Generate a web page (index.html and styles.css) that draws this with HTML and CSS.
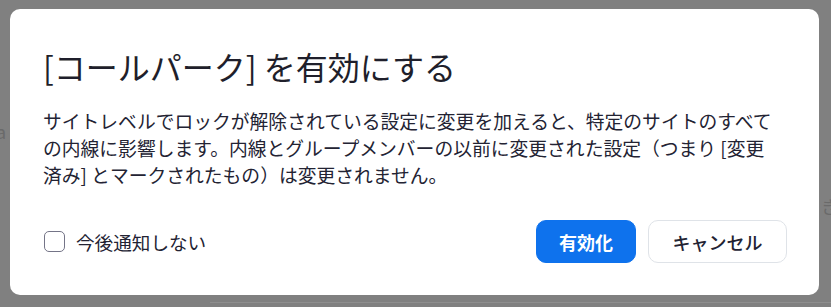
FILE: index.html
```html
<!DOCTYPE html>
<html lang="ja">
<head>
<meta charset="utf-8">
<title>コールパーク</title>
<link rel="stylesheet" href="styles.css">
</head>
<body>
<div class="backdrop">
  <span class="bg-hint bg-hint-left">a</span>
  <span class="bg-hint bg-hint-right">き</span>
  <div class="bg-line"></div>
</div>
<div class="overlay">
  <div class="dialog" role="dialog" aria-labelledby="dlg-title">
    <h1 class="dialog-title" id="dlg-title">[コールパーク] を有効にする</h1>
    <p class="dialog-body">サイトレベルでロックが解除されている設定に変更を加えると、特定のサイトのすべての内線に影響します。内線とグループメンバーの以前に変更された設定（つまり [変更済み] とマークされたもの）は変更されません。</p>
    <div class="dialog-footer">
      <label class="check">
        <span class="check-box"></span>
        <span class="check-label">今後通知しない</span>
      </label>
      <div class="actions">
        <button class="btn btn-primary">有効化</button>
        <button class="btn btn-secondary">キャンセル</button>
      </div>
    </div>
  </div>
</div>
</body>
</html>
```

FILE: styles.css
```css
html, body {
  margin: 0;
  padding: 0;
}

body {
  width: 831px;
  height: 307px;
  overflow: hidden;
  background: #808080;
  font-family: "Noto Sans CJK JP", "Noto Sans", sans-serif;
  position: relative;
}

.backdrop {
  position: absolute;
  inset: 0;
}

.bg-hint {
  position: absolute;
  color: #6a6a6a;
  font-size: 18px;
}

.bg-hint-left {
  left: -4px;
  top: 118px;
}

.bg-hint-right {
  right: -8px;
  top: 193px;
}

.bg-line {
  position: absolute;
  left: 210px;
  right: 0;
  top: 302px;
  height: 1px;
  background: #8e8e8e;
}

.overlay {
  position: absolute;
  inset: 0;
  display: flex;
  align-items: flex-start;
  padding: 9px 0 0 10px;
}

.dialog {
  width: 809px;
  box-sizing: border-box;
  background: #ffffff;
  border-radius: 10px;
  padding: 35px 32px 32px 33px;
  color: #232333;
}

.dialog-title {
  margin: 0;
  font-size: 32px;
  font-weight: 400;
  line-height: 45px;
  color: #1f1f2b;
}

.dialog-body {
  margin: 18px 0 0;
  max-width: 735px;
  font-size: 18.8px;
  line-height: 27px;
  color: #232333;
}

.dialog-footer {
  margin-top: 32px;
  display: flex;
  align-items: center;
  justify-content: space-between;
}

.check {
  display: flex;
  align-items: center;
  gap: 11px;
  padding-left: 1px;
}

.check-box {
  width: 21px;
  height: 21px;
  box-sizing: border-box;
  border: 1.5px solid #747487;
  border-radius: 5px;
  background: #fff;
}

.check-label {
  font-size: 18.6px;
  line-height: 27px;
  color: #232333;
}

.actions {
  display: flex;
  gap: 12px;
}

.btn {
  height: 43px;
  box-sizing: border-box;
  border-radius: 10px;
  font-family: "Noto Sans CJK JP", "Noto Sans", sans-serif;
  font-size: 18px;
  line-height: 1;
  padding: 0 22px;
  cursor: pointer;
}

.btn-primary {
  background: #0e72ed;
  border: 1px solid #0e72ed;
  color: #ffffff;
  font-weight: 700;
  width: 100px;
}

.btn-secondary {
  background: #ffffff;
  border: 1px solid #dfe3e8;
  color: #232333;
  font-weight: 500;
  width: 139px;
}
```
